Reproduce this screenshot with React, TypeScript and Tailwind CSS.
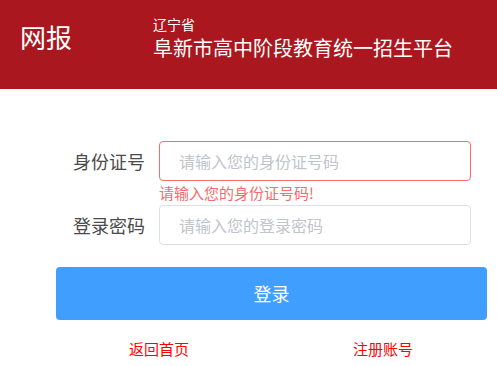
export default function App() {
  return (
    <div
      className="w-[497px] h-[366px] bg-white overflow-hidden"
      style={{ fontFamily: '"Noto Sans CJK SC", "Noto Sans", sans-serif' }}
    >
      {/* header */}
      <div className="h-[89px] bg-[#ab171e] flex text-white">
        <div className="w-[153px] pl-[20px] pt-[19px] text-[26px] leading-[36px]">网报</div>
        <div className="pt-[14px]">
          <div className="text-[14px] leading-[20px]">辽宁省</div>
          <div className="text-[20px] leading-[27px]">阜新市高中阶段教育统一招生平台</div>
        </div>
      </div>

      {/* form */}
      <div className="pt-[52px]">
        <div className="flex items-center">
          <label className="w-[145px] text-right text-[18px] text-[#4a4a4a]">身份证号</label>
          <input
            className="ml-[14px] w-[312px] h-[40px] rounded-[4px] border border-[#f56c6c] px-[19px] text-[16px] outline-none placeholder:text-[#c0c4cc]"
            placeholder="请输入您的身份证号码"
          />
        </div>
        <div className="ml-[159px] mt-[2px] mb-[2px] text-[15px] leading-[20px] text-[#f56c6c]">
          请输入您的身份证号码!
        </div>
        <div className="flex items-center">
          <label className="w-[145px] text-right text-[18px] text-[#4a4a4a]">登录密码</label>
          <input
            type="password"
            className="ml-[14px] w-[312px] h-[40px] rounded-[4px] border border-[#dcdfe6] px-[19px] text-[16px] outline-none placeholder:text-[#c0c4cc]"
            placeholder="请输入您的登录密码"
          />
        </div>

        <button className="ml-[56px] mt-[22px] w-[431px] h-[53px] rounded-[4px] bg-[#409eff] text-white text-[18px]">
          登录
        </button>

        <div className="flex mt-[19px] text-[15px] leading-[20px] text-[#ff0000]">
          <a className="w-[318px] text-center">返回首页</a>
          <a className="w-[130px] text-center">注册账号</a>
        </div>
      </div>
    </div>
  );
}
